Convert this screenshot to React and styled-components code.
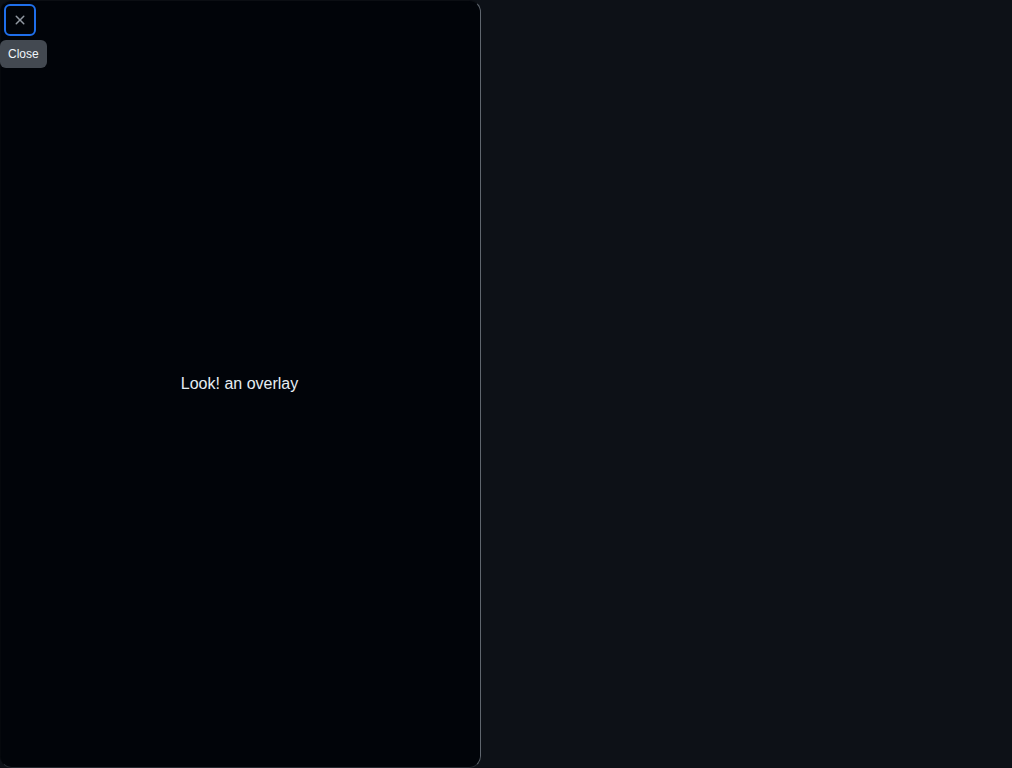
import React from "react";
import styled, { createGlobalStyle } from "styled-components";

const GlobalStyle = createGlobalStyle`
  html, body {
    margin: 0;
    padding: 0;
    background: #0d1117;
    font-family: "Liberation Sans", Arial, sans-serif;
    color: #e6edf3;
  }
`;

const Page = styled.div`
  height: 100vh;
  display: flex;
  overflow: hidden;
`;

const Panel = styled.div`
  position: relative;
  box-sizing: border-box;
  width: 481px;
  height: 100%;
  background: #010409;
  border: 1px solid;
  border-color: #0b0e13 #5f666e #262b31 #05080c;
  border-radius: 12px;
  display: flex;
  align-items: center;
  justify-content: center;
`;

const Message = styled.span`
  font-size: 16px;
  color: #e6edf3;
  margin-right: 2px;
`;

const CloseButton = styled.button`
  position: absolute;
  top: 3px;
  left: 3px;
  width: 32px;
  height: 32px;
  box-sizing: border-box;
  display: flex;
  align-items: center;
  justify-content: center;
  padding: 0;
  background: transparent;
  border: 2px solid #1f6feb;
  border-radius: 6px;
  color: #9198a1;
  cursor: pointer;
`;

const Tooltip = styled.div`
  position: absolute;
  top: 39px;
  left: -1px;
  padding: 0 8px;
  height: 28px;
  display: flex;
  align-items: center;
  background: #434951;
  color: #f0f6fc;
  font-size: 12px;
  border-radius: 6px;
`;

const XIcon = () => (
  <svg width="16" height="16" viewBox="0 0 16 16" fill="currentColor">
    <path d="M3.72 3.72a.75.75 0 0 1 1.06 0L8 6.94l3.22-3.22a.749.749 0 0 1 1.275.326.749.749 0 0 1-.215.734L9.06 8l3.22 3.22a.749.749 0 0 1-.326 1.275.749.749 0 0 1-.734-.215L8 9.06l-3.22 3.22a.751.751 0 0 1-1.042-.018.751.751 0 0 1-.018-1.042L6.94 8 3.72 4.78a.75.75 0 0 1 0-1.06Z" />
  </svg>
);

const App = () => (
  <>
    <GlobalStyle />
    <Page>
      <Panel>
        <CloseButton aria-label="Close">
          <XIcon />
        </CloseButton>
        <Tooltip>Close</Tooltip>
        <Message>Look! an overlay</Message>
      </Panel>
    </Page>
  </>
);

export default App;
